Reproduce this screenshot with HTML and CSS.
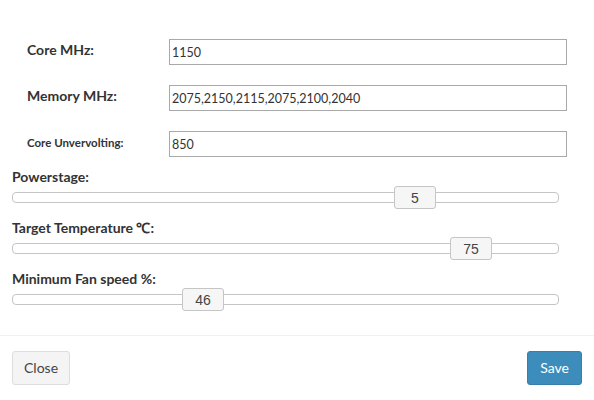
FILE: index.html
```html
<!DOCTYPE html>
<html>
<head>
<meta charset="utf-8">
<link rel="stylesheet" href="styles.css">
</head>
<body>
<div class="modal-body">
  <div class="fields">
    <div class="field">
      <label class="field-label">Core MHz:</label>
      <input class="text-input" type="text" value="1150">
    </div>
    <div class="field">
      <label class="field-label">Memory MHz:</label>
      <input class="text-input" type="text" value="2075,2150,2115,2075,2100,2040">
    </div>
    <div class="field">
      <label class="field-label small">Core Unvervolting:</label>
      <input class="text-input" type="text" value="850">
    </div>
  </div>
  <div class="sliders">
    <div class="slider-block">
      <div class="slider-label">Powerstage:</div>
      <div class="track"><span class="handle" style="left:69.9%">5</span></div>
    </div>
    <div class="slider-block">
      <div class="slider-label">Target Temperature ℃:</div>
      <div class="track"><span class="handle" style="left:80.2%">75</span></div>
    </div>
    <div class="slider-block">
      <div class="slider-label">Minimum Fan speed %:</div>
      <div class="track"><span class="handle" style="left:31%">46</span></div>
    </div>
  </div>
</div>
<div class="modal-footer">
  <button class="btn btn-default">Close</button>
  <button class="btn btn-primary">Save</button>
</div>
</body>
</html>
```
FILE: styles.css
```css
html, body {
  margin: 0;
  padding: 0;
  background: #fff;
}
body {
  font-family: "Source Sans Pro", Lato, "Liberation Sans", sans-serif;
  color: #333;
  width: 594px;
}
.modal-body {
  padding: 39px 0 0 0;
  height: 296px;
}
.fields {
  padding-left: 27px;
  display: flex;
  flex-direction: column;
  gap: 20px;
}
.field {
  display: flex;
  align-items: center;
  height: 26px;
}
.field-label {
  width: 142px;
  font-weight: 700;
  font-size: 14px;
  margin-top: -6px;
}
.field-label.small {
  font-size: 11.5px;
  margin-top: -3px;
}
.text-input {
  box-sizing: border-box;
  width: 398px;
  height: 26px;
  margin: 0;
  border: 1px solid #a9a9a9;
  padding: 1px 2px 0;
  font-family: inherit;
  font-size: 12.5px;
  color: #333;
  outline: none;
}
.sliders {
  margin-top: 13px;
  padding-left: 12px;
}
.slider-block {
  height: 51px;
}
.slider-label {
  font-weight: 700;
  font-size: 14px;
  line-height: 14px;
  height: 17px;
}
.track {
  position: relative;
  margin-top: 5px;
  width: 545px;
  height: 9px;
  border: 1px solid #c5c5c5;
  border-radius: 4px;
  background: #fff;
}
.handle {
  position: absolute;
  top: -7px;
  width: 40px;
  height: 21px;
  border: 1px solid #c5c5c5;
  border-radius: 3px;
  background: #f6f6f6;
  font-family: "Liberation Sans", Arial, sans-serif;
  font-size: 14px;
  line-height: 22px;
  text-align: center;
  color: #454545;
}
.modal-footer {
  border-top: 1px solid #f0f0f0;
  padding: 15px 12px;
  display: flex;
  justify-content: space-between;
}
.btn {
  box-sizing: border-box;
  height: 34px;
  padding: 6px 11px;
  font-family: inherit;
  font-size: 14px;
  line-height: 20px;
  border-radius: 3px;
  border: 1px solid;
  cursor: pointer;
}
.btn-default {
  background: #f4f4f4;
  border-color: #ddd;
  color: #444;
}
.btn-primary {
  background: #3c8dbc;
  border-color: #367fa9;
  color: #fff;
  padding: 6px 12px;
}
```
